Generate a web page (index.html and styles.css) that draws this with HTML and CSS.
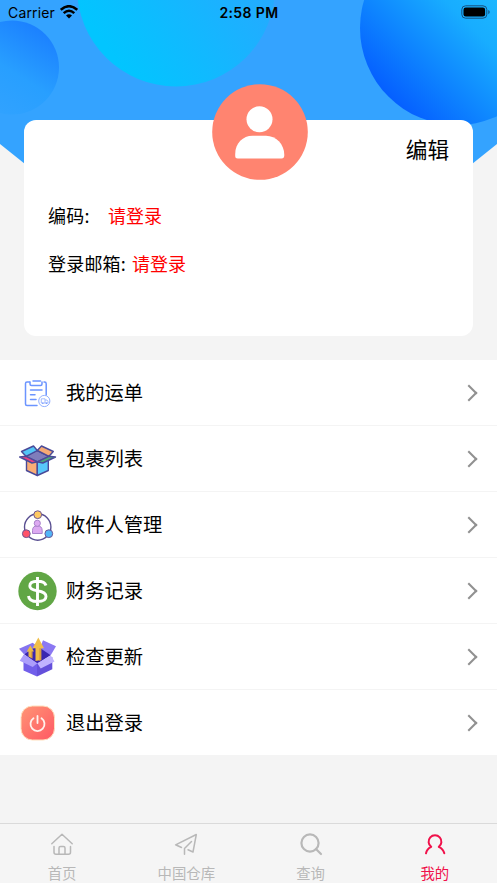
FILE: index.html
```html
<!DOCTYPE html>
<html lang="zh-CN">
<head>
<meta charset="utf-8">
<title>我的</title>
<link rel="stylesheet" href="styles.css">
</head>
<body>
<div class="screen">
  <svg class="backdrop" viewBox="0 0 497 360" aria-hidden="true">
    <defs>
      <linearGradient id="g1" x1=".35" y1=".95" x2=".85" y2=".15"><stop offset="0" stop-color="#30a2ff"/><stop offset=".45" stop-color="#289fff"/><stop offset="1" stop-color="#1c82ff"/></linearGradient>
      <linearGradient id="g2" x1=".15" y1=".8" x2=".85" y2=".3"><stop offset="0" stop-color="#02c5ff"/><stop offset="1" stop-color="#26a9ff"/></linearGradient>
      <linearGradient id="g3" x1=".15" y1=".85" x2=".75" y2=".25"><stop offset="0" stop-color="#0560ff"/><stop offset=".65" stop-color="#18adff"/><stop offset="1" stop-color="#1fbcff"/></linearGradient>
    </defs>
    <path d="M0 0H497V144L273 323H224L0 144Z" fill="#34a3ff"/>
    <circle cx="12" cy="67.500" r="47" fill="url(#g1)"/>
    <circle cx="176" cy="-12.500" r="99" fill="url(#g2)"/>
    <circle cx="457" cy="28" r="97" fill="url(#g3)"/>
  </svg>

  <header class="status">
    <div class="carrier"><span>Carrier</span>
      <svg width="18" height="14" viewBox="0 0 18 14"><g fill="none" stroke="#000" stroke-width="2.500"><path d="M.8 4.800Q9-2.400 17.200 4.800"/><path d="M3.700 8.100Q9 3.300 14.300 8.100"/></g><path d="M6 10.400Q9 8 12 10.400L9 13.400Z"/></svg>
    </div>
    <div class="time">2:58 PM</div>
    <div class="battery"><svg width="29" height="14" viewBox="0 0 29 14"><rect x=".8" y=".8" width="25" height="12.400" rx="3.800" fill="none" stroke="#17517f"/><rect x="2.500" y="2.500" width="21.600" height="9" rx="2.200"/><path d="M27.300 5v4.200q1.400-.6 1.400-2.100T27.300 5Z" fill="#17517f"/></svg></div>
  </header>

  <section class="card">
    <svg class="avatar" width="96" height="96" viewBox="0 0 96 96"><circle cx="48" cy="48" r="47.800" fill="#ff8470"/><circle cx="47.500" cy="35.300" r="13" fill="#fff"/><path d="M23.200 72V70C23.200 59 31 51.700 40.500 51.700H54C64 51.700 72.300 60 72.300 71Q72.300 74.500 69.500 74.500H25.700Q23.200 74.500 23.200 72Z" fill="#fff"/></svg>
    <div class="edit">编辑</div>
    <div class="fields">
      <div class="field"><span class="label code">编码:</span><span class="value">请登录</span></div>
      <div class="field"><span class="label mail">登录邮箱:</span><span class="value">请登录</span></div>
    </div>
  </section>

  <main class="menu">
    <div class="row">
      <svg class="icon" viewBox="0 0 40 40"><g fill="none" stroke="#6b94ff" stroke-width="1.500" stroke-linecap="round" stroke-linejoin="round"><path d="M11.500 9H9Q7.500 9 7.500 10.500V31Q7.500 32.500 9 32.500H19M26 9H26.500Q28.200 9 28.200 10.700V22"/><path d="M15 8H22.500M12 9V11Q12 12.500 13.500 12.500H22.500Q24 12.500 24 11V9M12.500 17H24M12.500 21.800H17M12.500 26.500H18"/></g><circle cx="26.300" cy="28" r="5.600" fill="#fff" stroke="#92b0ff" stroke-width="1"/><path d="M23.300 25.800H27V30H23.300ZM27 27H29L30 28.500V30H27" fill="none" stroke="#8eacff" stroke-width=".8"/><g fill="#7598ff"><circle cx="24.800" cy="30.300" r=".8"/><circle cx="28.500" cy="30.300" r=".8"/></g></svg>
      <span>我的运单</span><i class="chevron"></i>
    </div>
    <div class="row">
      <svg class="icon" viewBox="0 0 40 40"><g stroke="#4a4a98" stroke-width="1.400" stroke-linejoin="round"><path d="M8.500 19L19.300 23V36.500L8.500 31.500Z" fill="#f9ad76"/><path d="M19.300 23L30.300 19V31.500L19.300 36.500Z" fill="#58c8fa"/><path d="M8 17.300L19.300 11.500 31 17.300 19.300 22.800Z" fill="#7f7dbb"/><path d="M8 17.300L3.500 12.500 15.500 7 19.300 11.500Z" fill="#53c5f6"/><path d="M19.300 11.500L23.500 7 35.300 12.500 31 17.300Z" fill="#f6aa74"/><path d="M8 17.300L1.700 18 14 24 19.300 22.800Z" fill="#e84284"/><path d="M31 17.300L37.500 18 24.800 24 19.300 22.800Z" fill="#4ca97a"/></g></svg>
      <span>包裹列表</span><i class="chevron"></i>
    </div>
    <div class="row">
      <svg class="icon" viewBox="0 0 40 40"><g stroke="#6d5796" stroke-width="1"><circle cx="19.700" cy="22" r="13.200" fill="none" stroke="#594f91" stroke-width="1.400"/><circle cx="19.700" cy="9.700" r="3.900" fill="#ffca62"/><circle cx="8.300" cy="28.700" r="3.900" fill="#ff5269"/><circle cx="30.800" cy="28.700" r="3.900" fill="#52b5f8"/></g><g fill="#dca9f1" stroke="#a17bc6" stroke-width=".9"><path d="M14.500 28.500V25.500Q14.500 20.800 19.300 20.800T24.200 25.500V28.500Z"/><circle cx="19.300" cy="18.300" r="3.100"/></g></svg>
      <span>收件人管理</span><i class="chevron"></i>
    </div>
    <div class="row">
      <svg class="icon" viewBox="0 0 40 40"><circle cx="19.500" cy="20" r="19.200" fill="#61a645"/><path d="M28 14.500Q26.700 10.300 19.500 10.300 11.800 10.300 11.800 15 11.800 18.500 19.500 19.800 28 21.200 28 25.500 28 30.500 19.500 30.500 11 30.500 10.500 25M19.500 6V35" fill="none" stroke="#fff" stroke-width="2.900"/></svg>
      <span>财务记录</span><i class="chevron"></i>
    </div>
    <div class="row">
      <svg class="icon" viewBox="0 0 40 40"><path d="M6 17.300L14.700 10 25 8 32.700 18.300 19.300 27Z" fill="#3a26b0"/><path d="M1 11.700L14.700 5.700 19 9 6 17.300Z" fill="#8574ef"/><path d="M25 3.300L38 9.300 32.700 18.300 22 11Z" fill="#8b78f2"/><path d="M5.500 18L19 26.300V39.500L5.500 33.500Z" fill="#715eea"/><path d="M19 26.300L34.300 20V32.300L19 39.500Z" fill="#6450db"/><path d="M10.500 19.500V14.500H8.800L12.300 8.500 16 14.500H14.300V21.500Z" fill="#e9b944"/><path d="M17.500 24V11.300H14.700L20.300 .5 26 11.300H23.200V23Z" fill="#f0be48"/><path d="M21.300 24V11.300H23.200V23ZM13 20.800V14.500H14.300V21.500Z" fill="#d99b3f"/><path d="M6 17.300L19.300 26.300 14.700 30 1.700 23.700Z" fill="#ac9efb"/><path d="M19.300 26.300L32.700 18.300 36.500 24.500 22.700 31.500Z" fill="#c0b3ff"/></svg>
      <span>检查更新</span><i class="chevron"></i>
    </div>
    <div class="row">
      <svg class="icon" viewBox="0 0 40 40"><defs><linearGradient id="g4" x1="0" y1="0" x2="1" y2="1"><stop offset="0" stop-color="#ff9675"/><stop offset="1" stop-color="#ff5864"/></linearGradient></defs><rect x="3" y="3" width="33.500" height="34" rx="11.500" fill="url(#g4)" stroke="#ffe0bd"/><path d="M15.500 15.300A7 7 0 1 0 23.500 15.300M19.500 13V20" fill="none" stroke="#fff2ed" stroke-width="1.800" stroke-linecap="round"/></svg>
      <span>退出登录</span><i class="chevron"></i>
    </div>
  </main>

  <nav class="tabs">
    <div class="tab"><svg viewBox="0 0 26 26"><path d="M2.800 12.800L13 3.300 23.200 12.800M5 15.500V21.300Q5 23.300 7 23.300H19.500Q21.500 23.300 21.500 21.300V15.500M10 23V17Q10 15.500 11.500 15.500H14.500Q16 15.500 16 17V23"/></svg><span>首页</span></div>
    <div class="tab"><svg viewBox="0 0 26 26"><path d="M8.500 16.500L2.600 13.800 23.300 3.500 20 21 15 18.700M11.500 23.300V17.500L18.500 10.500"/></svg><span>中国仓库</span></div>
    <div class="tab"><svg class="search" viewBox="0 0 26 26"><circle cx="12" cy="12" r="8.600"/><path d="M18 18L23 23"/></svg><span>查询</span></div>
    <div class="tab active"><svg viewBox="0 0 26 26"><path d="M4 22.300Q4.700 18 9.200 15.800A6.400 6.400 0 1 1 16.800 15.800Q21.300 18 22.300 22.300"/></svg><span>我的</span></div>
  </nav>
</div>
</body>
</html>
```
FILE: styles.css
```css
* { box-sizing: border-box; }
body {
  margin: 0;
  background: #f4f4f4;
  color: #000;
  font-family: "Noto Sans CJK SC", sans-serif;
}
.screen {
  position: relative;
  height: 883px;
  display: flex;
  flex-direction: column;
  overflow: hidden;
}
.backdrop {
  position: absolute;
  top: 0;
  left: 0;
  width: 497px;
  height: 360px;
}
.status {
  position: relative;
  flex: none;
  height: 26px;
  display: grid;
  grid-template-columns: 1fr auto 1fr;
  align-items: center;
  padding: 0 7px 0 8px;
  font-family: Inter, sans-serif;
  font-size: 14px;
}
.carrier { display: flex; align-items: center; gap: 5px; letter-spacing: .15px; }
.carrier svg { margin-top: -2px; }
.time { font-weight: 600; letter-spacing: .4px; }
.carrier span, .time { margin-top: -1px; }
.battery { display: flex; justify-content: flex-end; margin-top: -2px; }
.card {
  position: relative;
  flex: none;
  height: 216px;
  margin: 94px 24px 24px;
  padding: 11px 24px 0;
  border-radius: 12px;
  background: #fff;
}
.avatar { position: absolute; left: 188px; top: -36px; }
.edit { height: 36px; line-height: 36px; font-size: 21.6px; text-align: right; }
.fields { padding-top: 24px; font-size: 18px; }
.field { display: flex; height: 48px; line-height: 48px; }
.label { letter-spacing: .2px; }
.code { width: 60px; }
.mail { width: 84px; }
.value { color: #f00; }
.menu { flex: none; }
.row {
  position: relative;
  display: flex;
  align-items: center;
  height: 66px;
  padding: 0 22px 0 18px;
  border-bottom: 1.5px solid #f4f4f4;
  background: #fff;
  font-size: 19.3px;
}
.icon { width: 40px; height: 40px; margin-right: 8px; flex: none; overflow: visible; }
.row span { flex: 1; margin-top: -2px; }
.chevron {
  width: 12px;
  height: 12px;
  border-top: 2px solid #909090;
  border-right: 2px solid #909090;
  transform: rotate(45deg);
}
.tabs {
  flex: none;
  margin-top: auto;
  height: 60px;
  display: grid;
  grid-template-columns: repeat(4, 1fr);
  border-top: 1.5px solid #dadada;
  background: #f5f5f5;
  color: #b8b8b8;
}
.tab { display: flex; flex-direction: column; align-items: center; padding-top: 7px; }
.tab svg {
  width: 26px;
  height: 26px;
  fill: none;
  stroke: currentColor;
  stroke-width: 1.5;
  stroke-linecap: round;
  stroke-linejoin: round;
}
.tab .search { stroke-width: 2.2; }
.tab span { margin-top: 6px; font-size: 14.4px; line-height: 20px; }
.active { color: #f0114a; }
.active svg { stroke-width: 2; }
```
